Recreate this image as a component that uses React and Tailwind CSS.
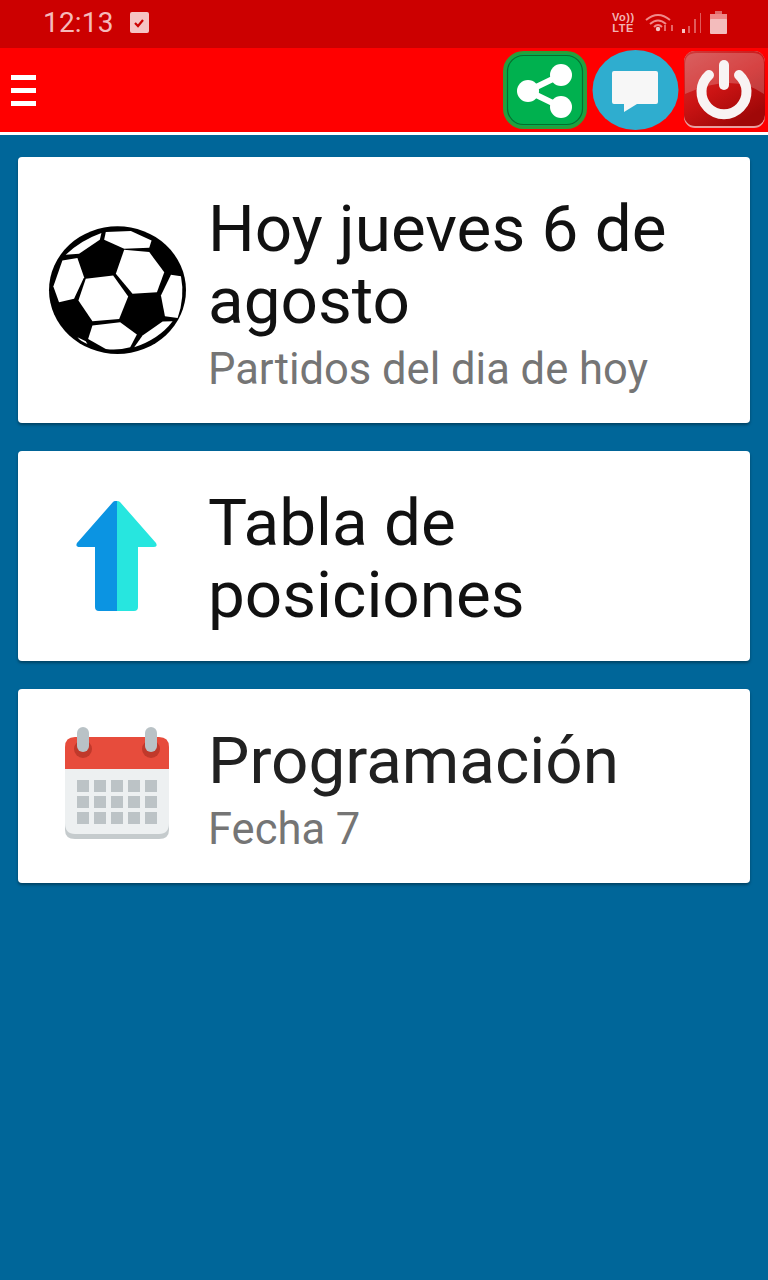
import React from 'react';

const ShareIcon = () => (
  <svg viewBox="0 0 85 80" className="w-[85px] h-[80px] shrink-0">
    <rect x="1.5" y="2.5" width="81" height="75" rx="19" fill="#00b14f" stroke="#2a9d3a" strokeWidth="3" />
    <rect x="4.5" y="5.5" width="75" height="69" rx="16" fill="none" stroke="#0b6b2c" strokeWidth="1.2" />
    <path d="M58 25 L25 41 L58 57" fill="none" stroke="#fff" strokeWidth="6" />
    <circle cx="58" cy="25" r="11" fill="#fff" />
    <circle cx="58" cy="57" r="11" fill="#fff" />
    <circle cx="25" cy="41" r="11" fill="#fff" />
  </svg>
);

const ChatIcon = () => (
  <svg viewBox="0 0 87 80" className="w-[87px] h-[80px] shrink-0">
    <ellipse cx="43.5" cy="40" rx="43" ry="40" fill="#2fadcf" />
    <path d="M22 21 H64 Q66 21 66 23 V52 Q66 54 64 54 H45 L32 62 V54 H22 Q20 54 20 52 V23 Q20 21 22 21 Z" fill="#f7f7f7" />
  </svg>
);

const PowerIcon = () => (
  <svg viewBox="0 0 83 80" className="w-[83px] h-[80px] shrink-0">
    <defs>
      <linearGradient id="powerBg" x1="0" y1="0" x2="0.6" y2="1">
        <stop offset="0" stopColor="#d03a3a" />
        <stop offset="0.55" stopColor="#cc1414" />
        <stop offset="1" stopColor="#a00808" />
      </linearGradient>
    </defs>
    <rect x="1" y="1" width="81" height="77" rx="11" fill="#e8a0a0" />
    <rect x="1" y="1" width="81" height="75" rx="11" fill="url(#powerBg)" />
    <path d="M2 14 Q2 3 14 3 H70 Q81 3 81 14 V44 Q50 22 2 44 Z" fill="#fff" fillOpacity="0.2" />
    <path d="M26 25 A22.5 22.5 0 1 0 56 25" fill="none" stroke="#f8f3f3" strokeWidth="10" strokeLinecap="round" />
    <path d="M41 15 V35" fill="none" stroke="#f8f3f3" strokeWidth="10" strokeLinecap="round" />
  </svg>
);

const BallIcon = () => (
  <svg viewBox="40 20 440 440" className="w-[147px] h-[147px] shrink-0">
    <ellipse cx="260" cy="239" rx="205" ry="191" fill="#000" />
    <g fill="#fff">
      <path d="M225 65 L300 62 L362 90 L355 112 L280 115 L220 88 Z" />
      <path d="M105 133 Q150 90 212 68 L207 88 L145 130 Z" />
      <path d="M95 150 L140 143 L160 200 L130 265 L85 275 L68 228 Z" />
      <path d="M165 205 L247 195 L292 258 L265 325 L185 332 L143 270 Z" />
      <path d="M280 118 L355 125 L400 185 L378 245 L305 250 L255 190 Z" />
      <path d="M420 193 L450 197 Q462 260 440 322 L402 317 L390 255 Z" />
      <path d="M185 345 L268 335 L318 372 L298 410 Q260 420 225 415 L172 385 Z" />
      <path d="M335 375 L395 333 L425 332 Q385 385 310 410 Z" />
      <path d="M140 380 L165 392 L170 400 Q150 392 140 380 Z" />
    </g>
  </svg>
);

const ArrowIcon = () => (
  <svg viewBox="0 0 82 112" className="w-[82px] h-[112px] shrink-0">
    <path d="M41 1 L39 1 Q38 1 37 2 L1 43 Q-1 47 4 47 H19 V107 Q19 111 23 111 H41 Z" fill="#0b94e2" />
    <path d="M41 1 Q43 1 44 2 L80 43 Q82 47 78 47 H62 V107 Q62 111 58 111 H41 Z" fill="#27e6df" />
  </svg>
);

const CalendarIcon = () => (
  <svg viewBox="0 0 104 113" className="w-[104px] h-[113px] shrink-0">
    <path d="M0 95 H104 V103 Q104 112 94 112 H10 Q0 112 0 103 Z" fill="#c5cbcd" />
    <path d="M0 40 H104 V96 Q104 107 94 107 H10 Q0 107 0 96 Z" fill="#edf0f1" />
    <path d="M0 42 V20 Q0 10 10 10 H94 Q104 10 104 20 V42 Z" fill="#e74c3c" />
    <circle cx="18" cy="22" r="9" fill="#c0392b" />
    <circle cx="86" cy="22" r="9" fill="#c0392b" />
    <rect x="12" y="0" width="12" height="25" rx="6" fill="#b9c2c6" />
    <rect x="80" y="0" width="12" height="25" rx="6" fill="#b9c2c6" />
    {[53, 69, 85].map((y) =>
      [12, 29, 46, 63, 80].map((x) => (
        <rect key={`${x}-${y}`} x={x} y={y} width="12" height="12" fill="#bcc3c6" />
      ))
    )}
  </svg>
);

const StatusIcons = () => (
  <div className="flex items-center mr-[41px]">
    <div className="font-['Liberation_Sans',sans-serif] font-bold text-[11px] leading-[11px] tracking-[0.5px] text-[#f2b3b3] text-center w-[22px]">
      <div>Vo))</div>
      <div>LTE</div>
    </div>
    <svg viewBox="0 0 56 24" className="w-[56px] h-[24px] ml-[11px]">
      <g fill="none" stroke="#f08a8a" strokeWidth="2">
        <path d="M1 9 Q13 -1 25 9" />
        <path d="M5 13 Q13 6 21 13" />
        <path d="M9 16 Q13 12 17 16" />
      </g>
      <circle cx="13" cy="18" r="2.2" fill="#f5c4c4" />
      <path d="M20 14 V20 M27 14 V20" stroke="#e88" strokeWidth="1.5" />
      <rect x="37" y="18" width="3" height="4" fill="#f5c4c4" />
      <rect x="43" y="15" width="2" height="7" fill="#e05a5a" />
      <rect x="49" y="8" width="2" height="14" fill="#e05a5a" />
      <rect x="55" y="2" width="1.5" height="20" fill="#e05a5a" />
    </svg>
    <svg viewBox="0 0 17 23" className="w-[17px] h-[23px] ml-[9px]">
      <rect x="5" y="0" width="7" height="3" fill="#e06a6a" />
      <rect x="0" y="3" width="17" height="6" fill="#e88" />
      <rect x="0" y="8" width="17" height="15" rx="1" fill="#f3bcbc" />
    </svg>
  </div>
);

const Card = ({ className, iconClass, textClass, icon, title, sub }) => (
  <div className={`flex items-center bg-white rounded-[4px] shadow-[0_2px_3px_rgba(0,0,0,0.35)] ${className}`}>
    <div className={`w-[191px] shrink-0 pl-[7px] flex justify-center ${iconClass || ''}`}>{icon}</div>
    <div className={`-ml-[1px] min-w-0 ${sub ? 'pt-[8px]' : 'pt-[6px]'}`}>
      <div className={`text-[65.6px] leading-[72px] ${textClass}`}>{title}</div>
      {sub && <div className="mt-[8px] text-[43.5px] leading-[50px] text-[#757575]">{sub}</div>}
    </div>
  </div>
);

export default function App() {
  return (
    <div className="w-[768px] h-[1280px] bg-[#006699] font-['Roboto',sans-serif] overflow-hidden">
      <div className="h-[48px] pb-[3px] bg-[#cc0000] flex items-center justify-between">
        <div className="flex items-center ml-[43px]">
          <span className="text-[28px] leading-[32px] tracking-[0.2px] text-[#f5baba]">12:13</span>
          <span className="ml-[16px] w-[19px] h-[21px] rounded-[2px] bg-[#f5c4c4] flex items-center justify-center">
            <svg viewBox="0 0 12 12" className="w-[12px] h-[12px]">
              <path d="M2 6 L5 9 L10 3" fill="none" stroke="#cc0000" strokeWidth="2.2" />
            </svg>
          </span>
        </div>
        <StatusIcons />
      </div>

      <div className="h-[87px] bg-[#ff0000] border-b-[3px] border-white flex items-center justify-between pl-[11px] pr-[2px]">
        <div className="flex flex-col gap-[8px]">
          <div className="w-[25px] h-[5px] bg-white" />
          <div className="w-[25px] h-[5px] bg-white" />
          <div className="w-[25px] h-[5px] bg-white" />
        </div>
        <div className="flex items-center gap-[4px]">
          <ShareIcon />
          <ChatIcon />
          <PowerIcon />
        </div>
      </div>

      <div className="flex flex-col gap-[28px] pt-[22px] px-[18px]">
        <Card
          className="h-[266px]"
          textClass="text-[#111111]"
          icon={<BallIcon />}
          title="Hoy jueves 6 de agosto"
          sub="Partidos del dia de hoy"
        />
        <Card
          className="h-[210px]"
          textClass="text-[#111111]"
          icon={<ArrowIcon />}
          title="Tabla de posiciones"
        />
        <Card
          className="h-[194px]"
          textClass="text-[#212121]"
          iconClass="pb-[6px]"
          icon={<CalendarIcon />}
          title="Programación"
          sub="Fecha 7"
        />
      </div>
    </div>
  );
}
